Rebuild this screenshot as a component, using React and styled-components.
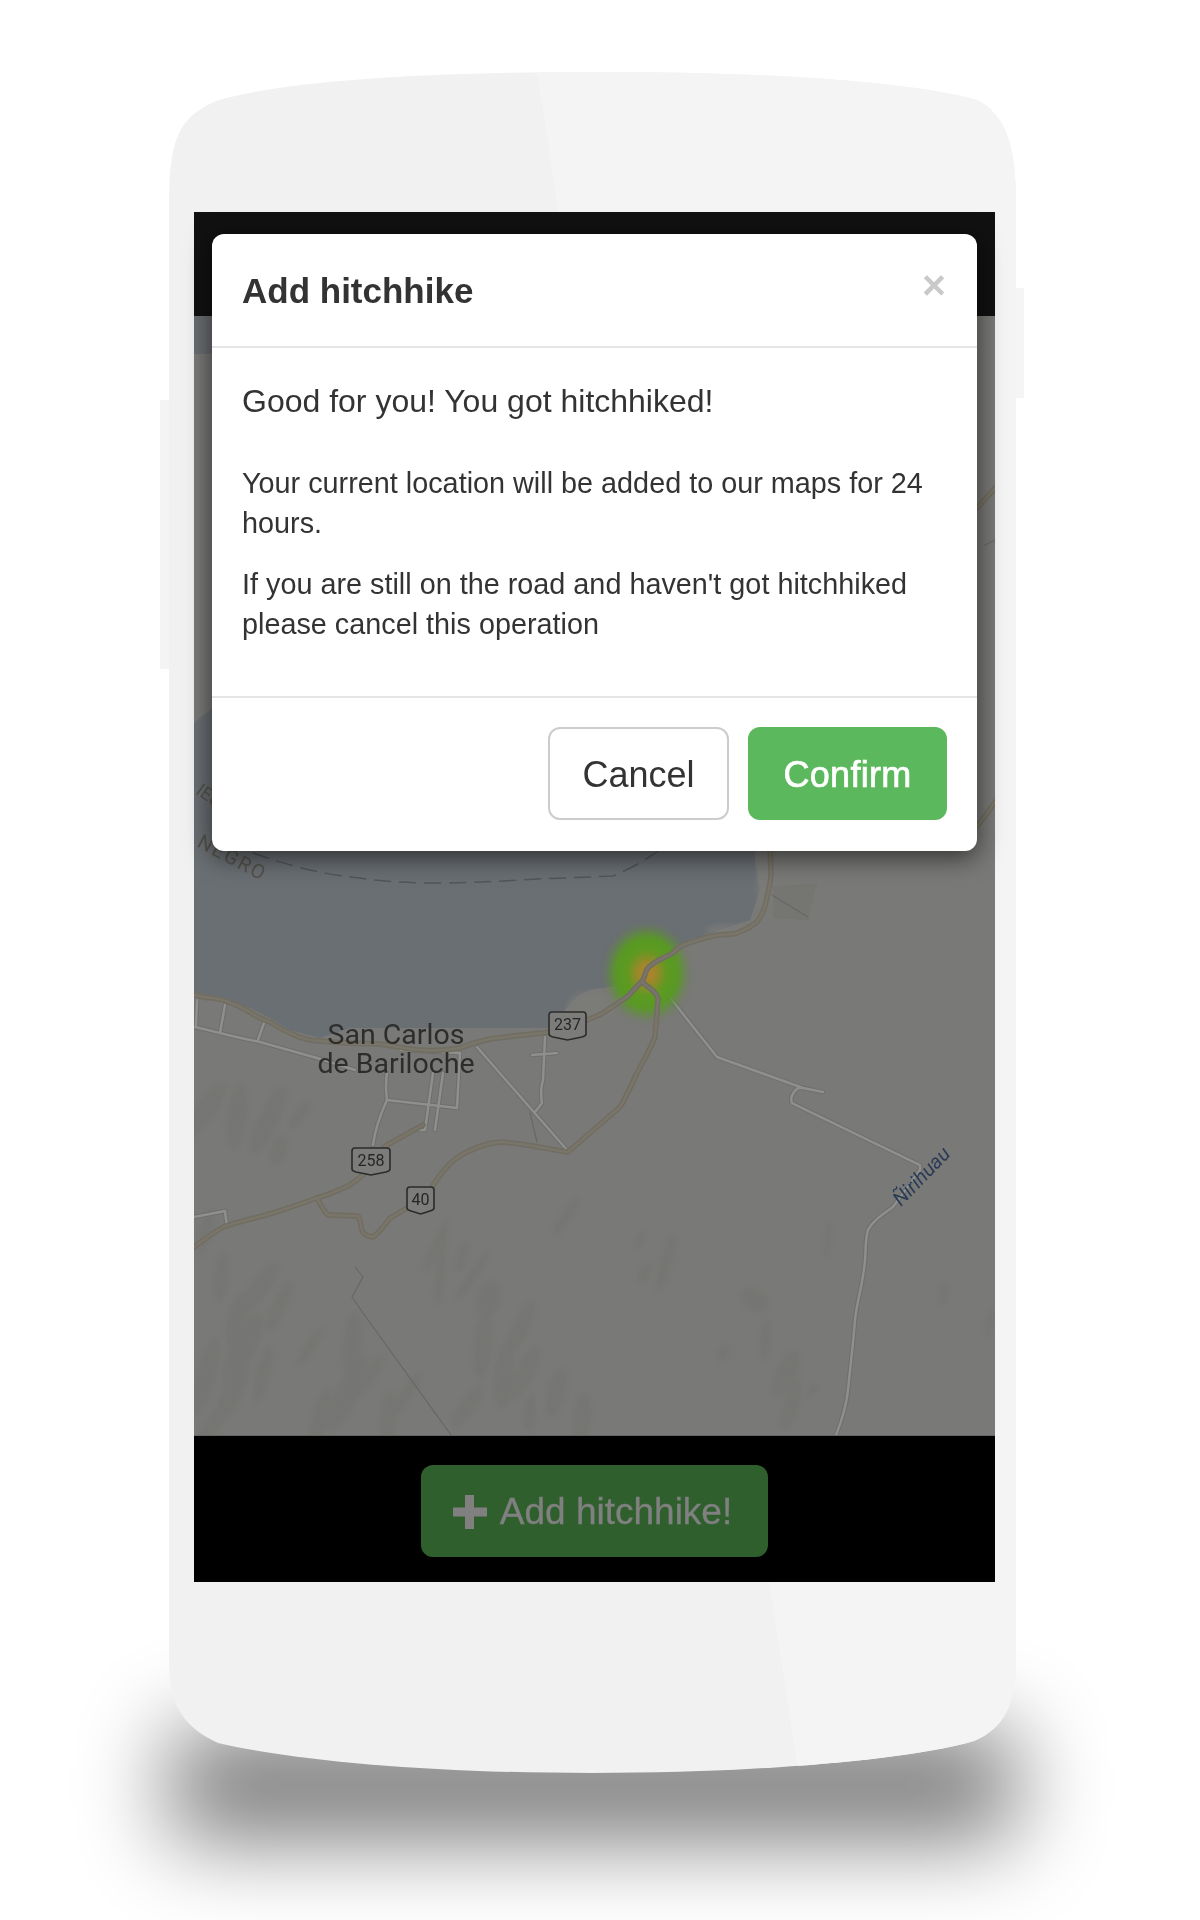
import React from "react";
import styled, { createGlobalStyle } from "styled-components";

const Global = createGlobalStyle`
  html, body { margin: 0; padding: 0; background: #fff; }
  * { box-sizing: border-box; }
`;

const Page = styled.div`
  position: relative;
  width: 1200px;
  height: 1920px;
  padding: 212px 205px 338px 194px;
  overflow: hidden;
  font-family: "Liberation Sans", Arial, sans-serif;
  color: #333;
`;

const PhoneArt = styled.svg`
  position: absolute;
  inset: 0;
`;

const Screen = styled.main`
  position: relative;
  display: flex;
  flex-direction: column;
  width: 801px;
  height: 1370px;
  background: #000;
`;

const StatusBar = styled.div`
  flex: 0 0 104px;
  background: #111;
`;

const MapArea = styled.div`
  flex: 0 0 1120px;
  background: #7a7a78;
  border-bottom: 1px solid #666;
  svg { display: block; }
`;

const Footer = styled.footer`
  flex: 1;
  display: flex;
  justify-content: center;
  padding-top: 29px;
  background: #000;
`;

const AddButton = styled.button`
  display: flex;
  align-items: center;
  justify-content: center;
  gap: 13px;
  width: 347px;
  height: 92px;
  padding: 2px 4px 0 0;
  border: 0;
  border-radius: 12px;
  background: #2f5f2d;
  color: #808080;
  font: 400 37px "Liberation Sans", Arial, sans-serif;
  -webkit-text-stroke: 0.3px #808080;
`;

const Modal = styled.section`
  position: absolute;
  top: 22px;
  left: 18px;
  width: 765px;
  height: 617px;
  display: flex;
  flex-direction: column;
  background: #fff;
  border-radius: 12px;
  box-shadow: 0 6px 26px rgba(0, 0, 0, 0.6);
`;

const ModalHeader = styled.header`
  flex: 0 0 114px;
  display: flex;
  justify-content: space-between;
  padding: 37px 30px 0;
  border-bottom: 2px solid #e5e5e5;
`;

const Title = styled.h2`
  margin: 0;
  font-size: 35px;
  line-height: 40px;
  font-weight: 700;
  color: #333;
`;

const Close = styled.span`
  margin: -8px 1px 0 0;
  font-size: 41px;
  line-height: 44px;
  font-weight: 700;
  color: #c9c9c9;
`;

const ModalBody = styled.div`
  flex: 1;
  padding: 35px 30px 0;
  border-bottom: 2px solid #e5e5e5;
`;

const Lead = styled.h4`
  margin: 0 0 44px;
  font-size: 32px;
  line-height: 36px;
  font-weight: 400;
  color: #333;
`;

const Para = styled.p`
  margin: 0 0 21px;
  font-size: 28.8px;
  line-height: 40px;
  color: #333;
`;

const ModalFooter = styled.div`
  flex: 0 0 153px;
  display: flex;
  justify-content: flex-end;
  gap: 19px;
  padding: 29px 30px 0;
`;

const ActionButton = styled.button`
  height: 93px;
  width: ${(p) => p.$width}px;
  padding: 2px 0 0;
  border: 2px solid ${(p) => (p.$primary ? "#5cb85c" : "#ccc")};
  border-radius: 12px;
  background: ${(p) => (p.$primary ? "#5cb85c" : "#fff")};
  color: ${(p) => (p.$primary ? "#fff" : "#333")};
  font: 400 36px "Liberation Sans", Arial, sans-serif;
  letter-spacing: ${(p) => (p.$primary ? "0.3px" : "0")};
  -webkit-text-stroke: ${(p) => (p.$primary ? "0.7px #fff" : "0")};
`;

const phonePath =
  "M169 205 C169 140 178 116 219 100 C290 80 430 72 592 72 C760 72 900 80 977 100 C1008 116 1016 150 1016 205 L1016 1660 C1016 1705 1004 1728 974 1741 C900 1762 740 1773 592 1773 C440 1773 300 1762 218 1743 C182 1726 169 1705 169 1660 Z";

const PhoneBody = () => (
  <PhoneArt width="1200" height="1920" viewBox="0 0 1200 1920">
    <defs>
      <clipPath id="phoneClip"><path d={phonePath} /></clipPath>
      <filter id="dropBlur" x="-40%" y="-200%" width="180%" height="500%">
        <feGaussianBlur stdDeviation="45" />
      </filter>
    </defs>
    <rect x="170" y="1730" width="845" height="110" fill="#000" opacity="0.52" filter="url(#dropBlur)" />
    <rect x="160" y="400" width="12" height="269" fill="#f4f4f4" />
    <rect x="1012" y="288" width="12" height="110" fill="#f5f5f5" />
    <path d={phonePath} fill="#f1f1f1" />
    <polygon points="526,0 1100,0 1100,1900 818,1900" fill="#f4f4f4" clipPath="url(#phoneClip)" />
  </PhoneArt>
);

const blobs = [
  [100,1050,12,40],[90,960,9,28],[130,870,8,32],[60,830,6,24],[170,920,6,28],[30,1130,9,38],[50,1260,7,28],
  [310,1040,8,34],[300,1180,10,42],[250,1250,7,28],[340,1130,6,26],[560,1040,8,32],[630,990,7,32],[570,900,11,18],
  [540,830,4,28],[480,800,4,38],[470,740,4,28],[520,770,4,16],[720,650,4,22],[600,1130,9,32],[640,1120,8,28],
  [700,1180,8,24],[530,1220,7,24],[750,1250,8,22],[870,820,5,10],[910,790,5,28],[1080,900,14,10],[1100,1020,4,20],
  [1140,1120,9,24],[1150,1210,7,26],[1190,1170,3,8],[1440,880,3,12],[1020,1060,5,8],[30,700,5,24],[30,330,9,32],
  [90,350,9,32],[150,360,9,36],[170,450,7,14],[210,345,5,16],[1220,720,2,18],[860,720,3,10],[1530,970,3,14],
  [410,1190,5,28],[380,1250,7,24],[80,1180,9,32],[140,1120,6,28],[230,1040,4,22],[650,1240,5,18],
];

const major = [
  "M194 995 C205 998 215 998 223 1000 C235 1004 243 1008 250 1012 C258 1018 264 1020 270 1022 C280 1028 285 1031 290 1033 C300 1038 310 1041 320 1041 C340 1043 360 1044 380 1044 C395 1046 410 1050 423 1050 C435 1051 448 1050 460 1048 C470 1044 480 1041 490 1039 C505 1037 520 1035 552 1032 C570 1028 580 1024 587 1020 C595 1017 600 1015 603 1013 C612 1007 620 1002 627 997 L643 980 C646 972 646 970 648 968 C655 960 665 958 673 953 C676 949 680 947 683 945 C692 942 703 938 713 936 C722 934 730 935 737 933 C745 930 752 926 757 922 C762 915 766 905 767 897 C770 885 771 878 771 873 L770 845",
  "M642 982 C650 988 656 992 658 998 C657 1012 656 1025 655 1037 C650 1050 643 1062 637 1073 C630 1088 626 1098 620 1107 L568 1152 C548 1149 525 1144 503 1142 C490 1142 480 1146 467 1152 C458 1156 452 1161 447 1167 C440 1174 436 1181 432 1187 L420 1200 L407 1208 C400 1212 396 1215 390 1218 C384 1226 380 1232 373 1237 C366 1236 363 1234 362 1230 C360 1224 361 1220 358 1216 L328 1215 C323 1210 320 1204 317 1198",
  "M194 1247 C204 1240 213 1233 223 1227 C240 1221 256 1218 273 1213 C290 1208 305 1202 317 1198 C330 1194 340 1190 350 1185 C356 1181 362 1176 365 1173 L371 1160 L387 1145 C400 1138 412 1131 423 1125",
  "M977 508 L995 488",
  "M977 826 C984 818 990 810 995 802",
];

const minor = [
  "M195 1027 L220 1033 C235 1037 250 1040 260 1042 L317 1058 L355 1070",
  "M225 1005 L220 1033",
  "M265 1020 L258 1040",
  "M197 1000 L196 1027",
  "M387 1073 C385 1085 386 1092 387 1100 L457 1108 L460 1053 L400 1050",
  "M433 1073 L425 1130 L412 1130",
  "M443 1073 L435 1130",
  "M387 1100 C380 1115 375 1130 373 1145",
  "M477 1047 L567 1150",
  "M545 1037 L543 1080 C540 1090 541 1097 542 1103 L535 1112",
  "M532 1055 L557 1053",
  "M627 995 L668 995 L717 1057 L803 1088 L823 1092 M803 1088 L798 1088 C792 1093 790 1098 792 1103 L920 1165 L920 1170 L893 1207 C880 1216 872 1222 868 1230 C865 1240 866 1250 865 1260 C863 1285 857 1300 855 1320 C853 1345 850 1370 848 1390 C846 1410 840 1425 836 1435",
  "M194 1217 L225 1211 L227 1227",
];

const thin = [
  "M355 1267 L363 1277 L352 1297 L363 1313 L451 1435",
  "M530 1113 L537 1142",
  "M772 895 L808 917",
  "M985 545 L995 540",
];

const Shield = ({ x, y, w, h, label }) => (
  <g>
    <path
      d={`M${x + 3} ${y} H${x + w - 3} Q${x + w} ${y} ${x + w} ${y + 3} V${y + h - 6} Q${x + w} ${y + h - 4} ${x + w - 4} ${y + h - 3} L${x + w / 2} ${y + h} L${x + 4} ${y + h - 3} Q${x} ${y + h - 4} ${x} ${y + h - 6} V${y + 3} Q${x} ${y} ${x + 3} ${y} Z`}
      fill="#7c7c7a"
      stroke="#2b2b2b"
      strokeWidth="1.6"
    />
    <text x={x + w / 2} y={y + h / 2 + 4} textAnchor="middle" fontFamily="Roboto, sans-serif" fontSize="16" fill="#262626">
      {label}
    </text>
  </g>
);

const MapDrawing = () => (
  <svg width="801" height="1119" viewBox="194 316 801 1119">
    <defs>
      <radialGradient id="heat">
        <stop offset="0" stopColor="#b8822a" />
        <stop offset="0.2" stopColor="#a0862a" />
        <stop offset="0.46" stopColor="#5c9a22" />
        <stop offset="0.7" stopColor="#589a24" />
        <stop offset="1" stopColor="#5f8a35" stopOpacity="0" />
      </radialGradient>
      <filter id="soft"><feGaussianBlur stdDeviation="2.5" /></filter>
      <filter id="soft1"><feGaussianBlur stdDeviation="0.6" /></filter>
      <filter id="heatBlur" x="-20%" y="-20%" width="140%" height="140%"><feGaussianBlur stdDeviation="2.5" /></filter>
    </defs>
    <rect x="194" y="316" width="801" height="1119" fill="#797977" />
    <rect x="194" y="316" width="40" height="38" fill="#6a6d71" />
    <path
      d="M194 723 C220 700 260 680 300 660 L700 660 C740 700 756 780 755 860 L760 890 L750 920 L720 930 L690 945 L650 965 L620 985 L590 990 C575 995 562 1010 556 1028 L350 1028 L320 1038 L290 1030 L270 1018 L250 1008 L223 998 L194 992 Z"
      fill="#6a6f73"
    />
    <ellipse cx="593" cy="1005" rx="26" ry="14" fill="#7d7d7a" opacity="0.6" filter="url(#soft)" />
    <ellipse cx="725" cy="931" rx="20" ry="7" fill="#7d7d7a" opacity="0.6" filter="url(#soft)" />
    <ellipse cx="765" cy="880" rx="9" ry="30" fill="#7d7d7a" opacity="0.6" filter="url(#soft)" />
    <polygon points="773,887 817,883 808,920 773,918" fill="#747472" filter="url(#soft1)" />
    <g fill="#6f6f6d" opacity="0.38" filter="url(#soft)">
      {blobs.map(([zx, zy, rx, ry], i) => {
        const cx = 190 + zx / 1.912;
        const cy = 1000 + zy / 3;
        return <ellipse key={i} cx={cx} cy={cy} rx={rx} ry={ry} transform={`rotate(${[25, 15, 35, 5][i % 4]} ${cx} ${cy})`} />;
      })}
    </g>
    <g fill="none" strokeLinecap="round" strokeLinejoin="round" filter="url(#soft1)">
      {thin.map((d) => <path key={d} d={d} stroke="#676765" strokeWidth="1.2" />)}
      {minor.map((d) => <path key={d} d={d} stroke="#6e6e6d" strokeWidth="4.5" />)}
      {minor.map((d) => <path key={d + "i"} d={d} stroke="#8f8f8d" strokeWidth="2.5" />)}
      <path d="M253 853 C290 866 325 875 360 878 C390 883 420 883 450 883 C480 882 510 881 537 879 L613 876 C632 868 645 860 657 852" stroke="#51565a" strokeWidth="1.5" strokeDasharray="16 9" />
    </g>
    <ellipse cx="647" cy="973" rx="44" ry="50" fill="url(#heat)" filter="url(#heatBlur)" />
    <g fill="none" strokeLinecap="round" strokeLinejoin="round" filter="url(#soft1)">
      {major.map((d) => <path key={d} d={d} stroke="#716d61" strokeWidth="5.5" />)}
      {major.map((d) => <path key={d + "i"} d={d} stroke="#79756a" strokeWidth="2.5" />)}
    </g>
    <Shield x={549} y={1012} w={37} h={28} label="237" />
    <Shield x={352} y={1148} w={38} h={27} label="258" />
    <Shield x={407} y={1187} w={27} h={27} label="40" />
    <g fontFamily="Roboto, sans-serif" fill="#2d2d2b" fontSize="28.5" textAnchor="middle">
      <text x="396" y="1044">San Carlos</text>
      <text x="396" y="1073">de Bariloche</text>
    </g>
    <text x="901" y="1207" transform="rotate(-46 901 1207)" fontFamily="Roboto, sans-serif" fontStyle="italic" fontSize="20" fill="#2b3c56">Ñirihuau</text>
    <text x="196" y="846" transform="rotate(28 196 846)" fontFamily="Roboto, sans-serif" fontSize="20" letterSpacing="2" fill="#54524a">NEGRO</text>
    <text x="195" y="793" transform="rotate(35 195 793)" fontFamily="Roboto, sans-serif" fontSize="18" fill="#54524a">IEU</text>
  </svg>
);

export default function App() {
  return (
    <Page>
      <Global />
      <PhoneBody />
      <Screen>
        <StatusBar />
        <MapArea>
          <MapDrawing />
        </MapArea>
        <Footer>
          <AddButton>
            <svg width="34" height="34" viewBox="0 0 34 34">
              <path d="M12 0h9v12.5h13v9H21V34h-9V21.5H0v-9h12z" fill="#808080" />
            </svg>
            Add hitchhike!
          </AddButton>
        </Footer>
        <Modal>
          <ModalHeader>
            <Title>Add hitchhike</Title>
            <Close>×</Close>
          </ModalHeader>
          <ModalBody>
            <Lead>Good for you! You got hitchhiked!</Lead>
            <Para>Your current location will be added to our maps for 24 hours.</Para>
            <Para>If you are still on the road and haven't got hitchhiked please cancel this operation</Para>
          </ModalBody>
          <ModalFooter>
            <ActionButton $width={181}>Cancel</ActionButton>
            <ActionButton $width={199} $primary>Confirm</ActionButton>
          </ModalFooter>
        </Modal>
      </Screen>
    </Page>
  );
}
